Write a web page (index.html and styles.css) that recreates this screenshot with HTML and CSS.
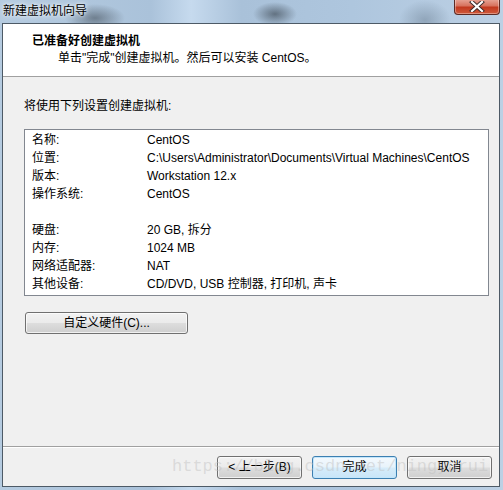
FILE: index.html
```html
<!DOCTYPE html>
<html lang="zh-CN">
<head>
<meta charset="utf-8">
<title>新建虚拟机向导</title>
<link rel="stylesheet" href="styles.css">
</head>
<body>
<div class="window">
  <div class="titlebar">
    <span class="title">新建虚拟机向导</span>
    <div class="close" aria-label="关闭">
      <svg width="16" height="11" viewBox="0 0 16 11"><path d="M3 1 L13 10 M13 1 L3 10" stroke="#3a2a2a" stroke-width="4" stroke-linecap="square"/><path d="M3 1 L13 10 M13 1 L3 10" stroke="#ffffff" stroke-width="2.2" stroke-linecap="square"/></svg>
    </div>
  </div>
  <div class="client">
    <div class="header">
      <div class="h-title">已准备好创建虚拟机</div>
      <div class="h-sub">单击"完成"创建虚拟机。然后可以安装 CentOS。</div>
    </div>
    <div class="body">
      <div class="intro">将使用下列设置创建虚拟机:</div>
      <div class="listbox">
        <div class="row"><span class="k">名称:</span><span class="v">CentOS</span></div>
        <div class="row"><span class="k">位置:</span><span class="v">C:\Users\Administrator\Documents\Virtual Machines\CentOS</span></div>
        <div class="row"><span class="k">版本:</span><span class="v">Workstation 12.x</span></div>
        <div class="row"><span class="k">操作系统:</span><span class="v">CentOS</span></div>
        <div class="row"><span class="k"></span><span class="v"></span></div>
        <div class="row"><span class="k">硬盘:</span><span class="v">20 GB, 拆分</span></div>
        <div class="row"><span class="k">内存:</span><span class="v">1024 MB</span></div>
        <div class="row"><span class="k">网络适配器:</span><span class="v">NAT</span></div>
        <div class="row"><span class="k">其他设备:</span><span class="v">CD/DVD, USB 控制器, 打印机, 声卡</span></div>
      </div>
      <button class="btn btn-custom">自定义硬件(C)...</button>
    </div>
    <div class="footer">
      <button class="btn">&lt; 上一步(B)</button>
      <button class="btn btn-default">完成</button>
      <button class="btn">取消</button>
      <div class="watermark">https://blog.csdn.net/ningyurui</div>
    </div>
  </div>
</div>
</body>
</html>
```
FILE: styles.css
```css
* { box-sizing: border-box; }
html, body {
  margin: 0;
  padding: 0;
}
body {
  width: 503px;
  height: 490px;
  overflow: hidden;
  font-family: "Liberation Sans", "Noto Sans CJK SC", sans-serif;
  font-size: 12px;
  color: #000;
}
.window {
  width: 503px;
  height: 490px;
  display: flex;
  flex-direction: column;
  background:
    radial-gradient(ellipse 30px 14px at 95px 18px, rgba(60,70,80,0.55), transparent),
    radial-gradient(ellipse 22px 12px at 275px 14px, rgba(50,60,70,0.6), transparent),
    radial-gradient(ellipse 26px 20px at 425px 20px, rgba(120,140,160,0.6), transparent),
    linear-gradient(90deg, #b5cbe0 0%, #aac2da 30%, #c6daee 38%, #a9c1d9 48%, #aec6de 70%, #bcd0e4 100%);
  position: relative;
}
.titlebar {
  height: 23px;
  position: relative;
  flex: none;
}
.title {
  position: absolute;
  left: 3px;
  top: 4px;
  font-size: 12px;
  line-height: 14px;
  color: #000;
  text-shadow: 0 0 6px rgba(255,255,255,0.9), 0 0 3px rgba(255,255,255,0.9);
}
.close {
  position: absolute;
  left: 454px;
  top: -1px;
  width: 46px;
  height: 16px;
  border: 1px solid #5c2a24;
  border-top: none;
  border-radius: 0 0 4px 4px;
  background: linear-gradient(#e8a799 0%, #d7735f 45%, #c2391f 55%, #cf5a3c 100%);
  box-shadow: inset 0 0 0 1px rgba(255,255,255,0.35);
  display: flex;
  align-items: center;
  justify-content: center;
}
.client {
  flex: 1;
  margin: 0 3px 3px 2px;
  border: 1px solid #4d5a66;
  background: #f0f0f0;
  display: flex;
  flex-direction: column;
}
.header {
  background: #fff;
  height: 53px;
  border-bottom: 1px solid #a0a0a0;
  padding: 9px 0 0 29px;
  flex: none;
}
.h-title {
  font-weight: bold;
  line-height: 16px;
}
.h-sub {
  padding-left: 26px;
  line-height: 18px;
}
.body {
  flex: 1;
  padding: 21px 10px 0 21px;
}
.intro {
  line-height: 16px;
  margin-bottom: 15px;
}
.listbox {
  background: #fff;
  border: 1px solid #828790;
  height: 167px;
  padding: 1px 0 0 7px;
}
.row {
  display: flex;
  height: 18px;
  line-height: 18px;
}
.k {
  width: 115px;
  flex: none;
}
.v {
  color: #000;
  white-space: nowrap;
  font-size: 12px;
}
.btn {
  font-family: "Liberation Sans", "Noto Sans CJK SC", sans-serif;
  font-size: 12px;
  color: #000;
  height: 23px;
  width: 85px;
  border: 1px solid #707070;
  border-radius: 3px;
  background: linear-gradient(#f2f2f2 0%, #ebebeb 48%, #dddddd 52%, #cfcfcf 100%);
  box-shadow: inset 0 0 0 1px rgba(255,255,255,0.7);
  padding: 0;
  line-height: 19px;
}
.btn-custom {
  width: 163px;
  height: 22px;
  margin: 16px 0 0 1px;
  display: block;
}
.btn-default {
  border-color: #3c7fb1;
  box-shadow: inset 0 0 0 1px #c3e6fb;
  background: linear-gradient(#f4f9fd 0%, #e8f3fb 48%, #d6ecfa 52%, #c9e5f8 100%);
}
.footer {
  flex: none;
  height: 40px;
  border-top: 1px solid #a0a0a0;
  box-shadow: inset 0 1px 0 #ffffff;
  display: flex;
  justify-content: flex-end;
  align-items: flex-start;
  padding: 9px 7px 0 0;
  gap: 10px;
  position: relative;
}
.watermark {
  position: absolute;
  left: 169px;
  top: 9px;
  font-family: "Liberation Mono", monospace;
  font-size: 17px;
  line-height: 22px;
  color: rgba(190,190,190,0.45);
  pointer-events: none;
  white-space: nowrap;
}
```
